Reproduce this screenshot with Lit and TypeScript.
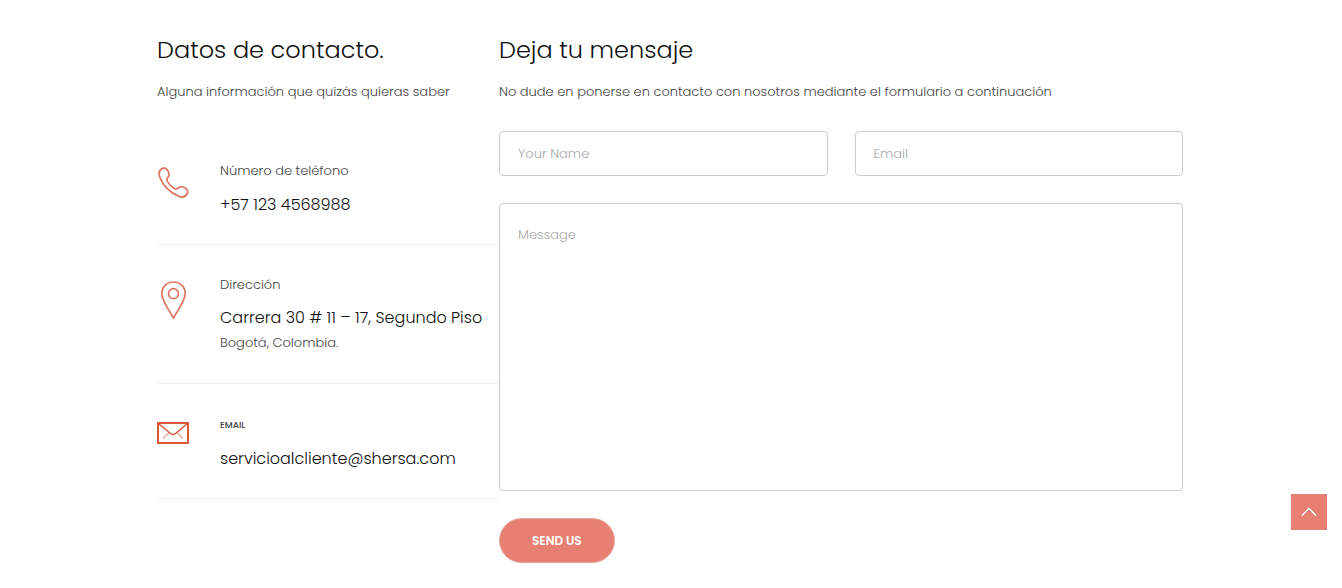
import { LitElement, html, css, svg } from "lit";
import { customElement } from "lit/decorators.js";

const phoneIcon = svg`<svg class="icon" viewBox="0 0 32 32" width="32" height="32" aria-hidden="true">
  <path d="M5.2 1.6C7.6.2 9.4 1.4 10.8 3.7c1.5 2.6 2.2 4.6.3 6.5-1.6 1.5-1.7 2.6-.4 4.7 1.6 2.6 3.6 4.7 6.2 6.3 2 1.2 3.1 1.1 4.6-.4 1.9-1.9 4-1.2 6.6.3 2.3 1.4 3.5 3.2 2.1 5.6-1.7 3-4.7 4-8.2 2.7C13.4 26.3 5.6 18.5 2.7 9.8 1.5 6.3 2.2 3.3 5.2 1.6z"/>
</svg>`;

const pinIcon = svg`<svg class="icon" viewBox="0 0 32 40" width="32" height="40" aria-hidden="true">
  <path d="M16.5 1C23.3 1 28.2 5.9 28.2 12.5c0 7.2-6.7 15.500-11.7 24.5C11.5 28 4.8 19.7 4.8 12.5 4.8 5.9 9.7 1 16.5 1z"/>
  <circle cx="16.5" cy="12.7" r="5"/>
</svg>`;

const mailIcon = svg`<svg class="icon mail" viewBox="0 0 32 24" width="32" height="24" aria-hidden="true">
  <rect x="1" y="3" width="30" height="20"/>
  <path class="flap" d="M2 4l11.500 9.500q2.500 2 5 0L30 4"/>
  <path class="faint" d="M6 18.500l6-6M26 18.500l-6-6"/>
</svg>`;

@customElement("app-root")
export class AppRoot extends LitElement {
  static styles = css`
    :host {
      display: block;
      background: #fff;
      color: #444;
      font: 300 13px/24px Poppins, Inter, "Open Sans", sans-serif;
    }
    * { box-sizing: border-box; }
    .page {
      display: grid;
      grid-template-columns: 1fr 2fr;
      max-width: 1028px;
      margin: 0 auto;
      padding: 33px 2px 24px 0;
    }
    .page > section { min-width: 0; }
    h2 {
      margin: 0;
      color: #111;
      font-size: 24px;
      font-weight: 300;
      line-height: 34px;
    }
    p { margin: 0; }
    .intro { margin: 13px 0 27px; }
    .list { margin: 0; padding: 0; list-style: none; }
    .entry {
      display: grid;
      grid-template-columns: 32px 1fr;
      column-gap: 31px;
      padding: 28px 0;
      border-bottom: 1px solid #f0f0f0;
    }
    .single { padding-bottom: 25px; }
    .single .value { line-height: 28px; }
    .mark { padding-top: 8px; }
    .icon {
      display: block;
      fill: none;
      stroke: #dc7662;
      stroke-width: 1.7;
      stroke-linejoin: round;
    }
    .mail { stroke: #d9583c; stroke-width: 2; stroke-linejoin: miter; }
    .flap { stroke-width: 1.5; }
    .faint { stroke-width: 1.5; opacity: 0.5; }
    .value {
      display: block;
      margin-top: 8px;
      color: #111;
      font-size: 16px;
      line-height: 26px;
      text-decoration: none;
      white-space: nowrap;
    }
    .small { font-size: 9px; font-weight: 500; }
    .form {
      display: grid;
      grid-template-columns: 1fr 1fr;
      gap: 27px;
    }
    .field {
      display: block;
      width: 100%;
      min-width: 0;
      height: 45px;
      margin: 0;
      padding: 0 18px;
      border: 1px solid #ccc;
      border-radius: 4px;
      background: #fff;
      color: #444;
      font: inherit;
    }
    .field::placeholder { color: #a8a8a8; opacity: 1; }
    .wide { grid-column: 1 / -1; }
    .message { height: 288px; padding: 19px 18px; resize: none; }
    .send {
      justify-self: start;
      height: 45px;
      padding: 0 32px;
      border: 1px solid #e5a79d;
      border-radius: 23px;
      background: #e77f72;
      color: #fff;
      font: inherit;
      font-size: 12px;
      font-weight: 600;
    }
    .top {
      position: fixed;
      right: 15px;
      bottom: 58px;
      display: grid;
      place-items: center;
      width: 36px;
      height: 36px;
      background: #e77f72;
    }
    .chevron { fill: none; stroke: #fff; stroke-width: 1.5; }
  `;

  render() {
    return html`
      <main class="page">
        <section>
          <h2>Datos de contacto.</h2>
          <p class="intro">Alguna información que quizás quieras saber</p>
          <ul class="list">
            <li class="entry single">
              <div class="mark">${phoneIcon}</div>
              <div>
                <p>Número de teléfono</p>
                <a class="value" href="tel:+571234568988">+57 123 4568988</a>
              </div>
            </li>
            <li class="entry">
              <div class="mark">${pinIcon}</div>
              <div>
                <p>Dirección</p>
                <p class="value">Carrera 30 # 11 – 17, Segundo Piso</p>
                <p>Bogotá, Colombia.</p>
              </div>
            </li>
            <li class="entry single">
              <div class="mark">${mailIcon}</div>
              <div>
                <p><span class="small">EMAIL</span></p>
                <a class="value" href="mailto:servicioalcliente@shersa.com">servicioalcliente@shersa.com</a>
              </div>
            </li>
          </ul>
        </section>
        <section>
          <h2>Deja tu mensaje</h2>
          <p class="intro">No dude en ponerse en contacto con nosotros mediante el formulario a continuación</p>
          <form class="form" @submit=${(e: Event) => e.preventDefault()}>
            <input class="field" type="text" name="name" placeholder="Your Name" aria-label="Your Name" />
            <input class="field" type="email" name="email" placeholder="Email" aria-label="Email" />
            <textarea class="field message wide" name="message" placeholder="Message" aria-label="Message"></textarea>
            <button class="send wide" type="submit">SEND US</button>
          </form>
        </section>
      </main>
      <a class="top" href="#" aria-label="Volver arriba">
        <svg class="chevron" viewBox="0 0 16 10" width="16" height="10" aria-hidden="true">
          <path d="M1 8.500l7-7 7 7" />
        </svg>
      </a>
    `;
  }
}
